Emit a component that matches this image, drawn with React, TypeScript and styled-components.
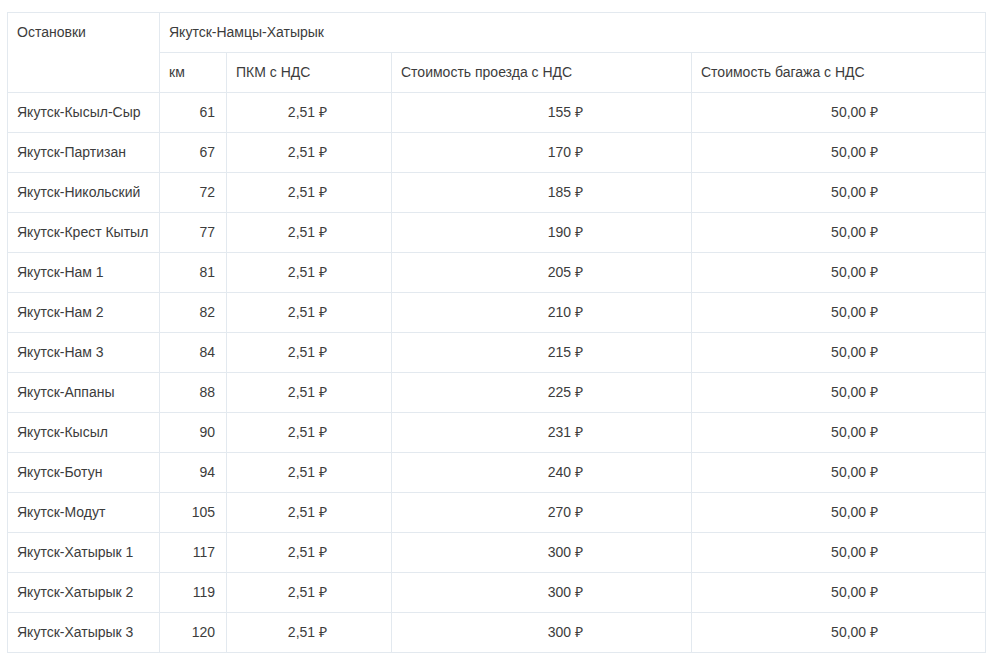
import styled, { createGlobalStyle } from "styled-components";

const GlobalStyle = createGlobalStyle`
  body {
    margin: 0;
    background: #fff;
    font-family: "Liberation Sans", Arial, sans-serif;
  }
`;

const Page = styled.div`
  padding: 12px 0 0 7px;
`;

const Table = styled.table`
  border-collapse: collapse;
  table-layout: fixed;
  width: 978px;
  font-size: 14px;
  line-height: 19px;
  color: #3c3c3c;
`;

const Cell = styled.td<{ $align?: "left" | "right"; $pr?: number }>`
  border: 1px solid #e3e9ef;
  height: 40px;
  box-sizing: border-box;
  padding: 0 ${({ $pr }) => $pr ?? 10}px 0 9px;
  text-align: ${({ $align }) => $align ?? "left"};
  vertical-align: middle;
  white-space: nowrap;
`;

const HeadCell = styled(Cell).attrs({ as: "th" })<{ $top?: boolean }>`
  font-weight: normal;
  vertical-align: ${({ $top }) => ($top ? "top" : "middle")};
  padding-top: ${({ $top }) => ($top ? "10px" : "0")};
`;

type Stop = { name: string; km: number; price: number };

const stops: Stop[] = [
  { name: "Якутск-Кысыл-Сыр", km: 61, price: 155 },
  { name: "Якутск-Партизан", km: 67, price: 170 },
  { name: "Якутск-Никольский", km: 72, price: 185 },
  { name: "Якутск-Крест Кытыл", km: 77, price: 190 },
  { name: "Якутск-Нам 1", km: 81, price: 205 },
  { name: "Якутск-Нам 2", km: 82, price: 210 },
  { name: "Якутск-Нам 3", km: 84, price: 215 },
  { name: "Якутск-Аппаны", km: 88, price: 225 },
  { name: "Якутск-Кысыл", km: 90, price: 231 },
  { name: "Якутск-Ботун", km: 94, price: 240 },
  { name: "Якутск-Модут", km: 105, price: 270 },
  { name: "Якутск-Хатырык 1", km: 117, price: 300 },
  { name: "Якутск-Хатырык 2", km: 119, price: 300 },
  { name: "Якутск-Хатырык 3", km: 120, price: 300 },
];

const App = () => {
  return (
    <Page>
      <GlobalStyle />
      <Table>
        <colgroup>
          <col style={{ width: 152 }} />
          <col style={{ width: 67 }} />
          <col style={{ width: 165 }} />
          <col style={{ width: 300 }} />
          <col style={{ width: 294 }} />
        </colgroup>
        <thead>
          <tr>
            <HeadCell rowSpan={2} $top>
              Остановки
            </HeadCell>
            <HeadCell colSpan={4}>Якутск-Намцы-Хатырык</HeadCell>
          </tr>
          <tr>
            <HeadCell>км</HeadCell>
            <HeadCell>ПКМ с НДС</HeadCell>
            <HeadCell>Стоимость проезда с НДС</HeadCell>
            <HeadCell>Стоимость багажа с НДС</HeadCell>
          </tr>
        </thead>
        <tbody>
          {stops.map((s) => (
            <tr key={s.name}>
              <Cell>{s.name}</Cell>
              <Cell $align="right" $pr={11}>
                {s.km}
              </Cell>
              <Cell $align="right" $pr={64}>
                2,51 ₽
              </Cell>
              <Cell $align="right" $pr={108}>
                {s.price} ₽
              </Cell>
              <Cell $align="right" $pr={107}>
                50,00 ₽
              </Cell>
            </tr>
          ))}
        </tbody>
      </Table>
    </Page>
  );
};

export default App;
